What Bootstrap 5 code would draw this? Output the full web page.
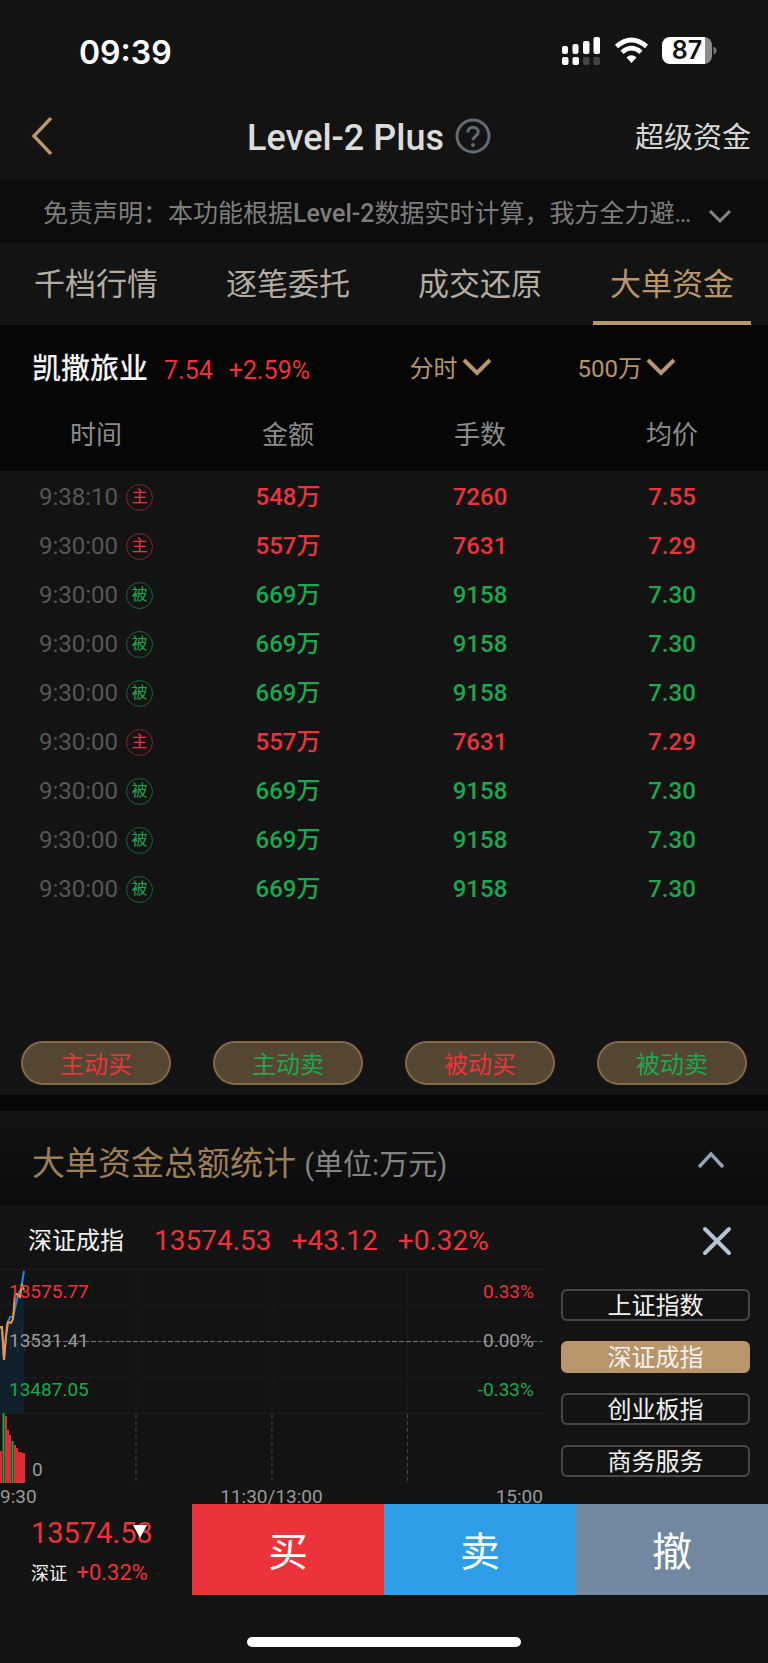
<!DOCTYPE html>
<html lang="zh-CN">
<head>
<meta charset="utf-8">
<meta name="viewport" content="width=device-width, initial-scale=1">
<title>Level-2 Plus</title>
<link href="https://cdn.jsdelivr.net/npm/bootstrap@5.3.0/dist/css/bootstrap.min.css" rel="stylesheet">
<style>
:root { --up:#ec333b; --down:#1ca84e; --gold:#b8956a; --panel:#131313; }
body { background:var(--panel); color:#dcdcdc; font-family:Roboto,"Noto Sans CJK SC",sans-serif; font-size:24px; line-height:32px; }
button { font-family:inherit; }
svg { display:block; flex:none; }
a { text-decoration:none; color:inherit; }
.plain-btn { background:none; border:0; padding:0; color:inherit; }
.up { color:var(--up); }
.down { color:var(--down); }
.gold { color:var(--gold); }
.status-bar { height:96px; padding:6px 51px 0 79px; }
.clock { font-family:Inter,sans-serif; font-weight:600; font-size:32px; color:#fff; padding-top:3px; }
.title-bar { height:84px; padding:0 17px 4px 31px; }
.title-start { flex:0 0 30%; }
.title-group { gap:10px; }
.title-bar h1 { font-size:36px; line-height:40px; padding-top:3px; }
.title-link { font-size:29px; line-height:36px; color:#d6d6d6; padding-top:4px; }
.notice { height:62px; background:#0c0c0c; color:#7d7d7d; font-size:25px; padding:5px 36px 0 43px; }
.notice strong { font-weight:500; }
.notice svg { margin-top:4px; }
.tab-row .nav-link { height:83px; border-radius:0; padding:2px 0 0; color:#b3aca2; font-size:31px; line-height:82px; position:relative; }
.tab-row .nav-link.active { color:var(--gold); background:none; }
.tab-row .nav-link.active::after { content:""; position:absolute; left:17px; right:17px; bottom:0; height:4px; background:var(--gold); }
.quote { background:#060606; height:88px; padding:0 92px 0 32px; }
.quote h2 { font-size:29px; line-height:40px; font-weight:500; color:#f2f2f2; }
.quote .figure { font-size:25px; padding-top:3px; }
.pickers { gap:86px; }
.pickers svg { margin-top:-5px; }
.deals { table-layout:fixed; }
.deals th { height:58px; background:#060606; color:#8c8c8c; font-weight:400; font-size:26px; padding:0 0 14px; }
.deals td { height:49px; padding:3px 0 0; font-weight:500; }
.deals .when { color:#575757; font-weight:400; }
.tag { width:27px; height:27px; border:1px solid; border-radius:50%; font-size:16px; line-height:24px; font-weight:400; }
.tag.up { border-color:#8c2529; }
.tag.down { border-color:#186535; }
.filters { padding:129px 0 10px; }
.filters .pill { width:150px; height:44px; border:2px solid #836a4b; border-radius:22px; background:#544633; padding:3px 0 0; }
.total { border-top:16px solid #060606; background:linear-gradient(#131313,#0b0b0d); height:111px; padding:12px 43px 0 32px; }
.total h2 { font-size:33px; line-height:40px; font-weight:400; color:#9c7e57; }
.total small { font-size:29px; color:#848484; }
.total svg { margin-top:-6px; }
.index-head { height:63px; padding:6px 36px 0 28px; color:#f2f2f2; }
.index-head .figure { font-size:28px; }
.index-name { margin-right:30px; }
.index-figures { gap:20px; }
.chart { flex:0 0 70.7%; position:relative; font-size:19px; line-height:20px; }
.scale-labels { position:absolute; top:13px; left:9px; right:9px; }
.scale-col { gap:29px; }
.muted { color:#999; }
.zero { position:absolute; top:191px; left:32px; }
.axis { height:21px; padding-top:5px; line-height:18px; }
.axis span { flex:1 1 0; }
.index-list { padding:20px 18px 0; gap:20px; }
.index-list button { height:32px; border:2px solid #474747; border-radius:6px; color:#f2f2f2; line-height:28px; padding-top:1px; }
.index-list button.chosen { background:var(--gold); border-color:var(--gold); }
.trade { height:91px; }
.trade > * { flex:0 0 25%; }
.trade button { border:0; color:#fff; font-size:40px; padding:7px 0 0; }
.buy { background:var(--up); } .sell { background:#2f9ee9; } .cancel { background:#7288a0; }
.mini { padding:11px 0 0 31px; position:relative; }
.mini .figure { font-size:29px; line-height:36px; }
.mini .caption-line { font-size:22px; line-height:44px; }
.mini .caption-line span:first-child { font-size:18px; color:#f2f2f2; }
.mini svg { position:absolute; left:132px; top:21px; }
.home-bar { width:274px; height:10px; border-radius:5px; background:#fff; margin:42px auto 16px; }
</style>
</head>
<body>
<div class="status-bar d-flex align-items-center justify-content-between">
  <span class="clock">09:39</span>
  <div class="d-flex align-items-center" aria-hidden="true">
    <svg width="155" height="30" viewBox="0 0 155 30">
      <g fill="#fff"><rect x="0" y="10" width="6" height="8" rx="2"/><rect x="10.500" y="8" width="6" height="10" rx="2"/><rect x="21" y="5" width="6.500" height="13" rx="2"/><rect x="31.500" y="1" width="6.500" height="17" rx="2"/><rect x="0" y="21" width="6.500" height="8" rx="2"/><rect x="10.500" y="21" width="6.500" height="8" rx="2"/></g>
      <g fill="#444"><rect x="21" y="21" width="6.500" height="8" rx="2"/><rect x="31.500" y="21" width="6.500" height="8" rx="2"/></g>
      <g fill="none" stroke="#fff" stroke-width="4.6"><path d="M54.5 10.5Q69.500 -2.500 84.500 10.500"/><path d="M60 16.200Q69.500 8.200 79 16.200"/></g>
      <path fill="#fff" d="M64.500 21.500Q69.500 17 74.500 21.500L69.500 27Z"/>
      <path fill="#8c8c8c" d="M140 1h2a8 8 0 0 1 8 8v11a8 8 0 0 1-8 8h-2z"/>
      <path fill="#fff" d="M108 1h35v27h-35a8 8 0 0 1-8-8V9a8 8 0 0 1 8-8z"/>
      <path fill="#777" d="M151.500 10.500q3 1 3 4t-3 4z"/>
      <text x="125" y="23" text-anchor="middle" font-family="Inter" font-weight="600" font-size="25" fill="#131313">87</text>
    </svg>
  </div>
</div>

<header class="title-bar d-flex align-items-center">
  <div class="title-start"><button class="plain-btn d-block" aria-label="返回"><svg width="22" height="38" viewBox="0 0 22 38" fill="none" stroke="#b8956a" stroke-width="3.400"><path d="M20 1 3 19l17 18"/></svg></button></div>
  <div class="title-group d-flex align-items-center">
    <h1 class="m-0">Level-2 Plus</h1>
    <button class="plain-btn" aria-label="帮助"><svg width="38" height="38" viewBox="0 0 38 38" fill="none" stroke="#646b75" stroke-width="3"><circle cx="19" cy="19" r="16"/><path d="M13.800 15.500c0-3.300 2.200-5.300 5.200-5.300s5.200 2 5.200 4.800c0 4-5.200 4.200-5.200 8.300"/><circle cx="19" cy="28" r="1" stroke-width="2"/></svg></button>
  </div>
  <a href="#" class="title-link ms-auto">超级资金</a>
</header>

<div class="notice d-flex align-items-center justify-content-between">
  <span class="text-truncate">免责声明：本功能根据<strong>Level-2</strong>数据实时计算，我方全力避…</span>
  <button class="plain-btn" aria-label="展开声明"><svg width="24" height="16" viewBox="0 0 24 16" fill="none" stroke="#858585" stroke-width="3"><path d="m2 3 10 10L22 3"/></svg></button>
</div>

<nav class="nav nav-justified tab-row">
  <a class="nav-link col" href="#">千档行情</a>
  <a class="nav-link col" href="#">逐笔委托</a>
  <a class="nav-link col" href="#">成交还原</a>
  <a class="nav-link col active" aria-current="page" href="#">大单资金</a>
</nav>

<main>
<section class="quote d-flex align-items-center justify-content-between">
  <div class="d-flex align-items-center">
    <h2 class="m-0 me-3">凯撒旅业</h2>
    <span class="figure up me-3">7.54</span><span class="figure up">+2.59%</span>
  </div>
  <div class="pickers d-flex">
    <button class="plain-btn gold d-flex align-items-center gap-1">分时<svg width="30" height="20" viewBox="0 0 30 20" fill="none" stroke="#b8956a" stroke-width="4"><path d="m2 3 13 13L28 3"/></svg></button>
    <button class="plain-btn gold d-flex align-items-center gap-1">500万<svg width="30" height="20" viewBox="0 0 30 20" fill="none" stroke="#b8956a" stroke-width="4"><path d="m2 3 13 13L28 3"/></svg></button>
  </div>
</section>

<table class="deals w-100 text-center">
  <thead><tr><th>时间</th><th>金额</th><th>手数</th><th>均价</th></tr></thead>
  <tbody>
    <tr class="up"><td><div class="d-flex align-items-center justify-content-center gap-2"><span class="when">9:38:10</span><span class="tag up">主</span></div></td><td>548万</td><td>7260</td><td>7.55</td></tr>
    <tr class="up"><td><div class="d-flex align-items-center justify-content-center gap-2"><span class="when">9:30:00</span><span class="tag up">主</span></div></td><td>557万</td><td>7631</td><td>7.29</td></tr>
    <tr class="down"><td><div class="d-flex align-items-center justify-content-center gap-2"><span class="when">9:30:00</span><span class="tag down">被</span></div></td><td>669万</td><td>9158</td><td>7.30</td></tr>
    <tr class="down"><td><div class="d-flex align-items-center justify-content-center gap-2"><span class="when">9:30:00</span><span class="tag down">被</span></div></td><td>669万</td><td>9158</td><td>7.30</td></tr>
    <tr class="down"><td><div class="d-flex align-items-center justify-content-center gap-2"><span class="when">9:30:00</span><span class="tag down">被</span></div></td><td>669万</td><td>9158</td><td>7.30</td></tr>
    <tr class="up"><td><div class="d-flex align-items-center justify-content-center gap-2"><span class="when">9:30:00</span><span class="tag up">主</span></div></td><td>557万</td><td>7631</td><td>7.29</td></tr>
    <tr class="down"><td><div class="d-flex align-items-center justify-content-center gap-2"><span class="when">9:30:00</span><span class="tag down">被</span></div></td><td>669万</td><td>9158</td><td>7.30</td></tr>
    <tr class="down"><td><div class="d-flex align-items-center justify-content-center gap-2"><span class="when">9:30:00</span><span class="tag down">被</span></div></td><td>669万</td><td>9158</td><td>7.30</td></tr>
    <tr class="down"><td><div class="d-flex align-items-center justify-content-center gap-2"><span class="when">9:30:00</span><span class="tag down">被</span></div></td><td>669万</td><td>9158</td><td>7.30</td></tr>
  </tbody>
</table>

<div class="filters d-flex justify-content-around">
  <button class="pill up">主动买</button>
  <button class="pill down">主动卖</button>
  <button class="pill up">被动买</button>
  <button class="pill down">被动卖</button>
</div>

<section class="total d-flex align-items-center justify-content-between">
  <h2 class="m-0">大单资金总额统计 <small>(单位:万元)</small></h2>
  <button class="plain-btn" aria-label="收起"><svg width="28" height="24" viewBox="0 0 28 24" fill="none" stroke="#94a3b3" stroke-width="3.400"><path d="M2 17 14 4l12 13"/></svg></button>
</section>

<section>
  <div class="index-head d-flex align-items-center">
    <span class="index-name">深证成指</span>
    <div class="index-figures d-flex up"><span class="figure">13574.53</span><span class="figure">+43.12</span><span class="figure">+0.32%</span></div>
    <button class="plain-btn ms-auto" aria-label="关闭"><svg width="30" height="30" viewBox="0 0 30 30" fill="none" stroke="#b4c3d3" stroke-width="4" stroke-linecap="round"><path d="m3 3 24 24M27 3 3 27"/></svg></button>
  </div>
  <div class="d-flex">
    <div class="chart">
      <svg class="w-100" height="214" viewBox="0 0 543 214" preserveAspectRatio="none">
        <g stroke="#1e1e1c" stroke-width="1"><path d="M0 .5H543M0 144.500H543"/><path stroke-dasharray="5 3" d="M0 36.500H543M0 108.500H543M136 0V144M272 0V144M407.500 0V144"/></g>
        <path stroke="#444" stroke-width="1" stroke-dasharray="4 3" d="M136 145V214M272 145V214M407.500 145V214"/>
        <path stroke="#6d6d78" stroke-width="1" stroke-dasharray="5 2" d="M0 72.500H543"/>
        <path fill="#12202e" d="M0 59 2 59 3 92 7 57 13 48 15 25 19 27 24 4V144H0Z"/>
        <path fill="none" stroke="#1d87f0" stroke-width="2" d="M0 59H2L4 91 7 55 10 48 13 48 18 26 21 20 24 2"/>
        <path fill="none" stroke="#f5923a" stroke-width="2" d="M0 58H2L4 91 6 67 8 53 11 54 13 50 15 25 17 25 20 28 22 15 24 21"/>
        <path fill="#123b2c" d="M10 74h1v7h-1zM17 74h1v9h-1zM24 74h1v8h-1z"/>
        <path fill="#5b2228" d="M14 62h1v9h-1zM21 58h1v13h-1z"/>
        <g fill="#df2d36"><path d="M0 182h2v32H0zM5 147h2v67H5zM7 161h2v53H7zM9 166h2v48H9zM14 176h2v38h-2zM16 179h2v35h-2zM18 183h2v31h-2zM20 183h2v31h-2zM22 184h3v30h-3z"/></g>
        <path fill="#1ca84e" d="M2.500 144h2v70h-2zM11.500 172h2v42h-2z"/>
      </svg>
      <div class="scale-labels d-flex justify-content-between">
        <div class="scale-col d-flex flex-column"><span class="up">13575.77</span><span class="muted">13531.41</span><span class="down">13487.05</span></div>
        <div class="scale-col d-flex flex-column text-end"><span class="up">0.33%</span><span class="muted">0.00%</span><span class="down">-0.33%</span></div>
      </div>
      <span class="zero muted">0</span>
      <div class="axis muted d-flex"><span>9:30</span><span class="text-center">11:30/13:00</span><span class="text-end">15:00</span></div>
    </div>
    <div class="index-list d-flex flex-column flex-grow-1">
      <button class="plain-btn">上证指数</button>
      <button class="plain-btn chosen" aria-pressed="true">深证成指</button>
      <button class="plain-btn">创业板指</button>
      <button class="plain-btn">商务服务</button>
    </div>
  </div>
</section>
</main>

<footer>
  <div class="trade d-flex">
    <div class="mini">
      <div class="figure up">13574.53</div>
      <div class="caption-line"><span class="me-1">深证</span> <span class="up">+0.32%</span></div>
      <svg width="16" height="13" viewBox="0 0 16 13" fill="#fff" aria-hidden="true"><path d="M1 0h14L8 13z"/></svg>
    </div>
    <button class="buy">买</button>
    <button class="sell">卖</button>
    <button class="cancel">撤</button>
  </div>
  <div class="home-bar"></div>
</footer>
<script src="https://cdn.jsdelivr.net/npm/bootstrap@5.3.0/dist/js/bootstrap.bundle.min.js"></script>
</body>
</html>
